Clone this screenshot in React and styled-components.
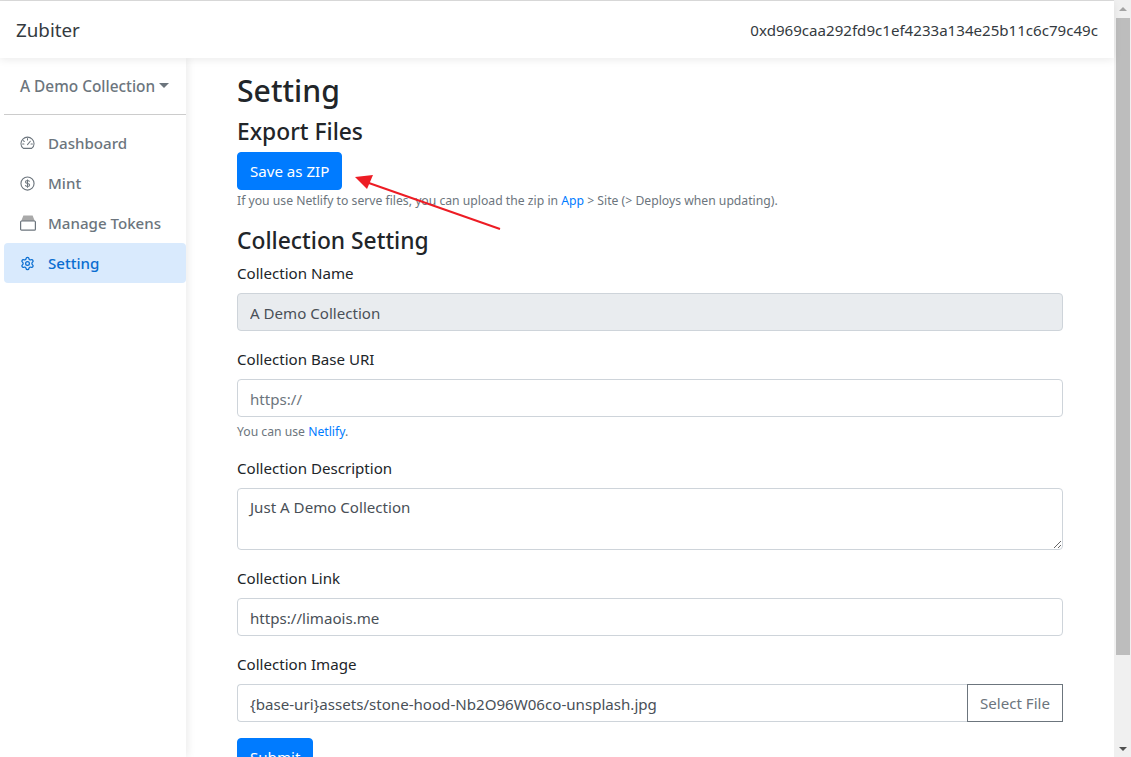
import React from "react";
import styled, { createGlobalStyle } from "styled-components";
import { Settings } from "lucide-react";

const font = `"Noto Sans", "Liberation Sans", sans-serif`;

const GlobalStyle = createGlobalStyle`
    html, body {
        margin: 0;
        height: 100%;
        overflow: hidden;
        background: #fff;
    }
    * {
        box-sizing: border-box;
    }
`;

const GaugeIcon = () => (
    <svg viewBox="0 0 16 16" fill="none" stroke="currentColor" strokeWidth="1.1">
        <path d="M3.6 13.2C2 12 1 10.2 1 8.2a7 7 0 0 1 14 0c0 2-1 3.8-2.6 5z" />
        <path d="M8 2.8v1.4M3.6 5l1 .9M2.8 8.6h1.4M11.8 8.6h1.4M8 9.2l3-3.6" strokeLinecap="round" />
    </svg>
);

const CoinIcon = () => (
    <svg viewBox="0 0 16 16" fill="none" stroke="currentColor">
        <circle cx="8" cy="8" r="7" strokeWidth="1.2" />
        <path d="M10.2 6.1C10 5.2 9.1 4.8 8 4.8c-1.2 0-2.2.6-2.2 1.6 0 2.3 4.5 1 4.5 3.2 0 1-1 1.6-2.3 1.6-1.2 0-2.1-.5-2.3-1.5M8 3.6v8.8" strokeWidth="1.1" />
    </svg>
);

const TrayIcon = () => (
    <TrayGlyph viewBox="0 0 16 16">
        <path d="M3.4 0.5h9.2l2.4 6h-14z" fill="#a9a9a9" />
        <rect x="0.6" y="6" width="14.8" height="9.2" rx="1" fill="#fff" stroke="currentColor" strokeWidth="1.2" />
    </TrayGlyph>
);

const menu = [
    { label: "Dashboard", icon: <GaugeIcon /> },
    { label: "Mint", icon: <CoinIcon /> },
    { label: "Manage Tokens", icon: <TrayIcon /> },
    { label: "Setting", icon: <Settings />, active: true },
];

const App = () => {
    return (
        <Page>
            <GlobalStyle />
            <Content>
                <Navbar>
                    <Brand>Zubiter</Brand>
                    <Account>0xd969caa292fd9c1ef4233a134e25b11c6c79c49c</Account>
                </Navbar>
                <Body>
                    <Sidebar>
                        <CollectionToggle>
                            A Demo Collection
                            <Caret />
                        </CollectionToggle>
                        <Divider />
                        <NavList>
                            {menu.map((item) => (
                                <NavItem key={item.label} $active={item.active}>
                                    {item.icon}
                                    <span>{item.label}</span>
                                </NavItem>
                            ))}
                        </NavList>
                    </Sidebar>
                    <Main>
                        <Title>Setting</Title>
                        <Section>Export Files</Section>
                        <Button>Save as ZIP</Button>
                        <Hint>
                            If you use Netlify to serve files, you can upload the zip in <a>App</a> &gt; Site (&gt; Deploys when updating).
                        </Hint>
                        <SectionSpaced>Collection Setting</SectionSpaced>
                        <Field>
                            <Label>Collection Name</Label>
                            <Input value="A Demo Collection" disabled readOnly />
                        </Field>
                        <Field>
                            <Label>Collection Base URI</Label>
                            <Input placeholder="https://" readOnly />
                            <FieldHint>
                                You can use <a>Netlify</a>.
                            </FieldHint>
                        </Field>
                        <Field>
                            <Label>Collection Description</Label>
                            <TextArea value="Just A Demo Collection" readOnly />
                        </Field>
                        <Field>
                            <Label>Collection Link</Label>
                            <Input value="https://limaois.me" readOnly />
                        </Field>
                        <Field>
                            <Label>Collection Image</Label>
                            <InputGroup>
                                <GroupInput value="{base-uri}assets/stone-hood-Nb2O96W06co-unsplash.jpg" readOnly />
                                <OutlineButton>Select File</OutlineButton>
                            </InputGroup>
                        </Field>
                        <Button>Submit</Button>
                    </Main>
                </Body>
                <Arrow width="160" height="66" viewBox="0 0 160 66">
                    <line x1="148" y1="59" x2="14" y2="12" stroke="#ed1c24" strokeWidth="2" />
                    <polygon points="3,7 21,5 15,19" fill="#ed1c24" />
                </Arrow>
            </Content>
            <Scrollbar>
                <ScrollArrow $up />
                <ScrollTrack>
                    <ScrollThumb />
                </ScrollTrack>
                <ScrollArrow />
            </Scrollbar>
        </Page>
    );
};

const Page = styled.div`
    display: flex;
    height: 757px;
    overflow: hidden;
    font-family: ${font};
    font-size: 15.1px;
    line-height: 24px;
    color: #212529;
`;

const Content = styled.div`
    position: relative;
    flex: 1;
    min-width: 0;
    display: flex;
    flex-direction: column;
    border-top: 1px solid #dcdcdc;
`;

const Navbar = styled.nav`
    position: relative;
    z-index: 2;
    height: 57px;
    flex: none;
    display: flex;
    align-items: center;
    justify-content: space-between;
    padding: 0 16px;
    background: #fff;
    box-shadow: 0 2px 8px rgba(0, 0, 0, 0.08);
`;

const Brand = styled.div`
    font-size: 18.8px;
    color: #343a40;
`;

const Account = styled.div`
    color: #343a40;
`;

const Body = styled.div`
    flex: 1;
    min-height: 0;
    display: flex;
`;

const Sidebar = styled.aside`
    width: 186px;
    flex: none;
    padding: 10px 0 0 4px;
    background: #fff;
    box-shadow: 2px 0 8px rgba(0, 0, 0, 0.08);
`;

const CollectionToggle = styled.div`
    display: flex;
    align-items: center;
    height: 38px;
    padding-left: 16px;
    font-size: 15.4px;
    font-weight: 500;
    color: #6c757d;
    white-space: nowrap;
`;

const Caret = styled.i`
    margin-left: 4px;
    margin-bottom: 3px;
    border-top: 5px solid #6c757d;
    border-left: 5px solid transparent;
    border-right: 5px solid transparent;
`;

const Divider = styled.hr`
    margin: 8px 0 8px;
    border: 0;
    border-top: 1px solid #ccc;
`;

const NavList = styled.div`
    display: flex;
    flex-direction: column;
`;

const NavItem = styled.div`
    display: flex;
    align-items: center;
    gap: 13px;
    height: 40px;
    padding-left: 16px;
    border-radius: 4px;
    font-weight: 500;
    color: ${(p) => (p.$active ? "#0a6ed1" : "#6c757d")};
    background: ${(p) => (p.$active ? "#d9eafd" : "transparent")};

    svg {
        width: 15px;
        height: 15px;
        flex: none;
    }
`;

const TrayGlyph = styled.svg`
    && {
        width: 16px;
        height: 16px;
        margin-right: -1px;
    }
`;

const Main = styled.main`
    flex: 1;
    min-width: 0;
    padding: 14px 51px 0;
`;

const Title = styled.h1`
    margin: 0 0 8px;
    font-size: 30.2px;
    font-weight: 500;
    line-height: 38.4px;
`;

const Section = styled.h2`
    margin: 0 0 5px;
    font-size: 22.8px;
    font-weight: 500;
    line-height: 28.8px;
`;

const SectionSpaced = styled(Section)`
    margin: 18px 0 5px;
`;

const Button = styled.button`
    display: block;
    height: 38px;
    padding: 0 12px;
    border: 1px solid #007bff;
    border-radius: 4px;
    background: #007bff;
    color: #fff;
    font: inherit;
`;

const Hint = styled.small`
    display: block;
    padding-top: 1px;
    margin-bottom: -1px;
    font-size: 12.2px;
    line-height: 19.2px;
    color: #6c757d;

    a {
        color: #007bff;
    }
`;

const FieldHint = styled(Hint)`
    margin-top: 4px;
`;

const Field = styled.div`
    margin-bottom: 16px;
`;

const Label = styled.label`
    display: block;
    margin-bottom: 8px;
`;

const Input = styled.input`
    display: block;
    width: 100%;
    height: 38px;
    padding: 7px 12px 5px;
    border: 1px solid #ced4da;
    border-radius: 4px;
    background: #fff;
    color: #495057;
    font: inherit;
    outline: none;

    &:disabled {
        background: #e9ecef;
    }

    &::placeholder {
        color: #6c757d;
    }
`;

const TextArea = styled.textarea`
    display: block;
    width: 100%;
    height: 62px;
    padding: 6px 12px;
    border: 1px solid #ced4da;
    border-radius: 4px;
    color: #495057;
    font: inherit;
    outline: none;
`;

const InputGroup = styled.div`
    display: flex;
`;

const GroupInput = styled(Input)`
    flex: 1;
    min-width: 0;
    border-right: 0;
    border-radius: 4px 0 0 4px;
`;

const OutlineButton = styled.button`
    flex: none;
    width: 96px;
    height: 38px;
    padding: 0;
    border: 1px solid #6c757d;
    background: #fff;
    color: #6c757d;
    font: inherit;
`;

const Arrow = styled.svg`
    position: absolute;
    left: 352px;
    top: 169px;
`;

const Scrollbar = styled.div`
    width: 17px;
    flex: none;
    display: flex;
    flex-direction: column;
    background: #f0f0f0;
`;

const ScrollArrow = styled.div`
    height: 17px;
    flex: none;
    display: flex;
    align-items: center;
    justify-content: center;

    &::before {
        content: "";
        border-left: 4px solid transparent;
        border-right: 4px solid transparent;
        ${(p) => (p.$up ? "border-bottom: 4px solid #a3a3a3;" : "border-top: 4px solid #505050;")}
    }
`;

const ScrollTrack = styled.div`
    flex: 1;
    min-height: 0;
`;

const ScrollThumb = styled.div`
    height: 637px;
    margin: 1px 1px 0 2px;
    background: #bdbdbd;
`;

export default App;
